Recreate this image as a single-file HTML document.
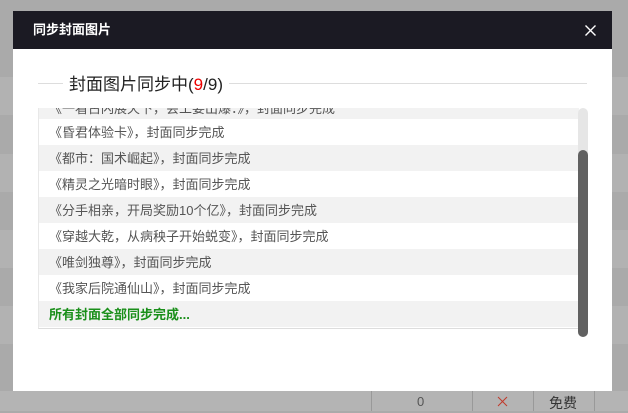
<!DOCTYPE html><html><head><meta charset="utf-8"><style>
body{margin:0;width:628px;height:411px;overflow:hidden;background:#aaa;font-family:"Liberation Sans","Noto Sans CJK SC",sans-serif;position:relative}
.band{position:absolute;left:0;width:628px;height:38px;background:#b2b2b2}
.vl{position:absolute;top:391px;height:20px;width:1px;background:#999}
.dlg{position:absolute;left:13px;top:11px;width:599px;height:380px;background:#fff}
.hd{height:38px;background:#1b1a23;color:#fff;font-size:13px;font-weight:bold;line-height:38px;padding-left:20px;position:relative}
.x{position:absolute;right:16px;top:14px}
.lg{position:absolute;left:25px;top:72px;width:549px;border-top:1px solid #ddd}
.lt{position:absolute;left:50px;top:63px;background:#fff;padding:0 6px;font-size:17px;color:#222;line-height:22px}
.list{position:absolute;left:25px;top:97px;width:540px;height:220px;overflow:hidden;border-bottom:1px solid #ddd;border-left:1px solid #e8e8e8}
.r{height:26px;line-height:28px;font-size:13px;color:#555;padding-left:10px}
.g{background:#f2f2f2}
.sb{position:absolute;left:565px;top:97px;width:10px;height:229px;background:#e6e6e6;border-radius:5px}
.th{position:absolute;left:565px;top:139px;width:10px;height:187px;background:#616161;border-radius:5px}
</style></head><body>
<div class="band" style="top:77px"></div><div class="band" style="top:154px"></div><div class="band" style="top:230px"></div><div class="band" style="top:306px"></div>
<div style="position:absolute;left:0;top:391px;width:628px;height:20px;background:#b4b4b4"></div>
<div class="vl" style="left:371px"></div><div class="vl" style="left:472px"></div><div class="vl" style="left:533px"></div><div class="vl" style="left:594px"></div>
<div style="position:absolute;left:417px;top:394px;font-size:13px;color:#555">0</div>
<svg style="position:absolute;left:497px;top:396px" width="11" height="11"><path d="M1 1L10 10M10 1L1 10" stroke="#c0392b" stroke-width="1"/></svg>
<div style="position:absolute;left:549px;top:393px;font-size:14px;color:#333">免费</div>
<div class="dlg">
<div class="hd">同步封面图片<svg class="x" width="11" height="11"><path d="M0.5 0.5L10.5 10.5M10.5 0.5L0.5 10.5" stroke="#fff" stroke-width="1.4"/></svg></div>
<div class="lg"></div>
<div class="lt">封面图片同步中(<span style="color:#e00">9</span>/9)</div>
<div class="list">
<div class="r g" style="height:11px;line-height:2px">《一看古闪展天下，会工要出爆：》，封面同步完成</div>
<div class="r">《昏君体验卡》，封面同步完成</div>
<div class="r g">《都市：国术崛起》，封面同步完成</div>
<div class="r">《精灵之光暗时眼》，封面同步完成</div>
<div class="r g">《分手相亲，开局奖励10个亿》，封面同步完成</div>
<div class="r">《穿越大乾，从病秧子开始蜕变》，封面同步完成</div>
<div class="r g">《唯剑独尊》，封面同步完成</div>
<div class="r">《我家后院通仙山》，封面同步完成</div>
<div class="r g" style="color:#1a8f1a;font-weight:bold">所有封面全部同步完成...</div>
</div>
<div class="sb"></div><div class="th"></div>
</div>
</body></html>
